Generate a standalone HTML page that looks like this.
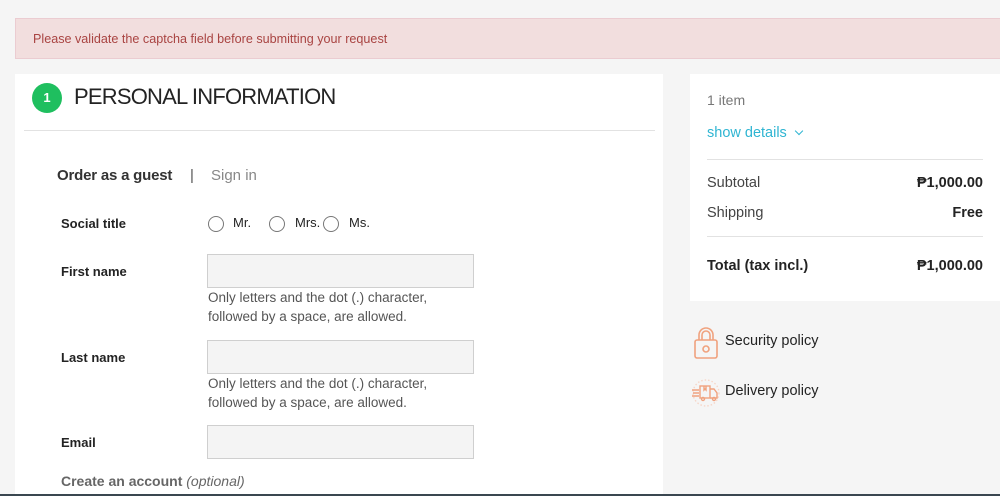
<!DOCTYPE html>
<html><head><meta charset="utf-8"><style>
*{margin:0;padding:0;box-sizing:border-box}
body{width:1000px;height:496px;overflow:hidden;background:#f5f5f5;font-family:"Liberation Sans",sans-serif;position:relative;color:#232323}
.a{position:absolute;white-space:nowrap}
.alert{position:absolute;left:15px;top:18px;width:985px;height:41px;background:#f2dede;border:1px solid #ebccd1;border-right:none}
.panel{position:absolute;background:#fff}
.lbl{font-size:13px;font-weight:bold;left:61px}
.inp{position:absolute;left:207px;width:267px;height:34px;background:#f4f4f4;border:1px solid #cfcfcf}
.hint{font-size:13.5px;color:#555;left:208px;line-height:19px}
.rad{position:absolute;width:16px;height:16px;border:1px solid #777;border-radius:50%;top:216px;background:#fff}
.hr{position:absolute;height:1px;background:#e2e2e2}
</style></head><body>
<div class="alert"></div>
<div class="a" style="left:33px;top:32px;font-size:12.6px;color:#a94442">Please validate the captcha field before submitting your request</div>
<div class="panel" style="left:15px;top:74px;width:648px;height:422px"></div>
<div class="panel" style="left:690px;top:74px;width:310px;height:227px"></div>
<div class="a" style="left:32px;top:83px;width:30px;height:30px;border-radius:50%;background:#1fbf5f;color:#fff;font-size:13px;font-weight:bold;text-align:center;line-height:30px">1</div>
<div class="a" style="left:74px;top:84px;font-size:22px;letter-spacing:-0.8px">PERSONAL INFORMATION</div>
<div class="hr" style="left:24px;top:130px;width:631px"></div>
<div class="a" style="left:57px;top:167px;font-size:15px;font-weight:bold;color:#333;letter-spacing:-0.2px">Order as a guest</div>
<div class="a" style="left:190px;top:167px;font-size:15px;color:#555">|</div>
<div class="a" style="left:211px;top:167px;font-size:15px;color:#888">Sign in</div>
<div class="a lbl" style="top:216px">Social title</div>
<div class="rad" style="left:208px"></div><div class="a" style="left:233px;top:215px;font-size:13px">Mr.</div>
<div class="rad" style="left:269px"></div><div class="a" style="left:295px;top:215px;font-size:13px">Mrs.</div>
<div class="rad" style="left:323px"></div><div class="a" style="left:349px;top:215px;font-size:13px">Ms.</div>
<div class="a lbl" style="top:264px">First name</div>
<div class="inp" style="top:254px"></div>
<div class="a hint" style="top:288px">Only letters and the dot (.) character,<br>followed by a space, are allowed.</div>
<div class="a lbl" style="top:350px">Last name</div>
<div class="inp" style="top:340px"></div>
<div class="a hint" style="top:374px">Only letters and the dot (.) character,<br>followed by a space, are allowed.</div>
<div class="a lbl" style="top:435px">Email</div>
<div class="inp" style="top:425px"></div>
<div class="a" style="left:61px;top:473px;font-size:14px;font-weight:bold;color:#666">Create an account <i style="font-weight:normal">(optional)</i></div>
<div class="a" style="left:0;top:494px;width:1000px;height:2px;background:#3a4750"></div>
<div class="a" style="left:707px;top:92px;font-size:14px;color:#777">1 item</div>
<div class="a" style="left:707px;top:125px;font-size:14.5px;color:#2fb5d2">show details <span style="display:inline-block;width:6px;height:6px;border-right:1.6px solid #2fb5d2;border-bottom:1.6px solid #2fb5d2;transform:rotate(45deg);margin-left:5px;position:relative;top:-3px"></span></div>
<div class="hr" style="left:707px;top:159px;width:276px"></div>
<div class="a" style="left:707px;top:175px;font-size:14.5px;color:#444">Subtotal</div>
<div class="a" style="right:17px;top:175px;font-size:14.5px;font-weight:bold">₱1,000.00</div>
<div class="a" style="left:707px;top:205px;font-size:14.5px;color:#444">Shipping</div>
<div class="a" style="right:17px;top:205px;font-size:14.5px;font-weight:bold">Free</div>
<div class="hr" style="left:707px;top:236px;width:276px"></div>
<div class="a" style="left:707px;top:258px;font-size:14.5px;font-weight:bold">Total (tax incl.)</div>
<div class="a" style="right:17px;top:258px;font-size:14.5px;font-weight:bold">₱1,000.00</div>
<svg class="a" style="left:693px;top:326px" width="26" height="34" viewBox="0 0 26 34" fill="none" stroke="#f0a27e" stroke-width="1.6"><path d="M6 14V9a7 7 0 0 1 14 0v5"/><path d="M9 14V9a4 4 0 0 1 8 0v5"/><rect x="2" y="14" width="22" height="18" rx="2"/><circle cx="13" cy="23" r="3"/></svg>
<div class="a" style="left:725px;top:333px;font-size:14.5px">Security policy</div>
<svg class="a" style="left:690px;top:378px" width="32" height="30" viewBox="0 0 32 30" fill="none" stroke="#f0a27e" stroke-width="1.4"><circle cx="16" cy="15" r="13" stroke="#f6d6c8" stroke-dasharray="1.5 2"/><path d="M2 12h7M3 15h6M2 18h7"/><rect x="10" y="8" width="10" height="12"/><path d="M20 11h4l3 4v5h-7M14 8v4l1-1 1 1V8"/><circle cx="13" cy="21" r="1.5"/><circle cx="24" cy="21" r="1.5"/></svg>
<div class="a" style="left:725px;top:383px;font-size:14.5px">Delivery policy</div>
</body></html>
